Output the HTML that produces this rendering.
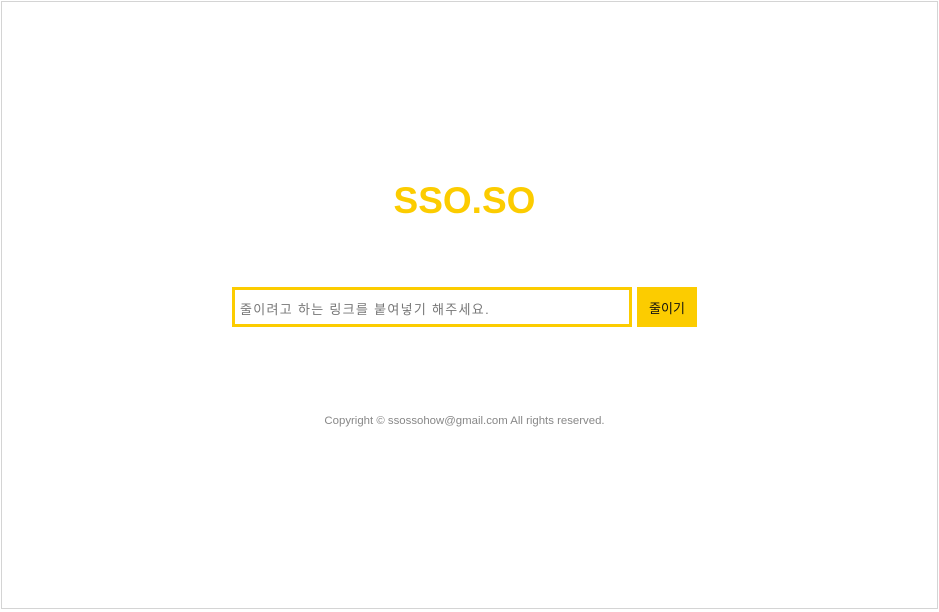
<!DOCTYPE html>
<html><head><meta charset="utf-8"><style>
html,body{margin:0;padding:0;background:#fff;width:939px;height:612px;overflow:hidden}
.frame{position:absolute;left:1px;top:1px;width:935px;height:606px;border:1px solid #d4d4d4}
.title{position:absolute;left:-5px;width:939px;top:180px;text-align:center;font-family:"Liberation Sans",sans-serif;font-weight:bold;font-size:37px;color:#fccc00}
.inp{position:absolute;left:232px;top:287px;width:394px;height:34px;border:3px solid #fccc00;box-sizing:content-box}
.inp span{position:absolute;left:5px;top:9px;font-family:"Liberation Sans","Noto Sans CJK KR",sans-serif;font-size:13px;color:#777;letter-spacing:1.3px}
.btn{position:absolute;left:637px;top:289px;width:60px;height:40px;font-family:"Liberation Sans","Noto Sans CJK KR",sans-serif;font-size:13px;color:#111;text-align:center;line-height:40px}
.bg{position:absolute;left:637px;top:287px;width:60px;height:40px;background:#fccc00}
.copy{position:absolute;left:0;width:929px;top:415px;text-align:center;font-family:"Liberation Sans",sans-serif;font-size:11.4px;color:#888}
</style></head><body>
<div class="frame"></div>
<div class="title">SSO.SO</div>
<div class="inp"><span>줄이려고 하는 링크를 붙여넣기 해주세요.</span></div>
<div class="bg"></div>
<div class="btn">줄이기</div>
<div class="copy">Copyright © ssossohow@gmail.com All rights reserved.</div>
</body></html>
